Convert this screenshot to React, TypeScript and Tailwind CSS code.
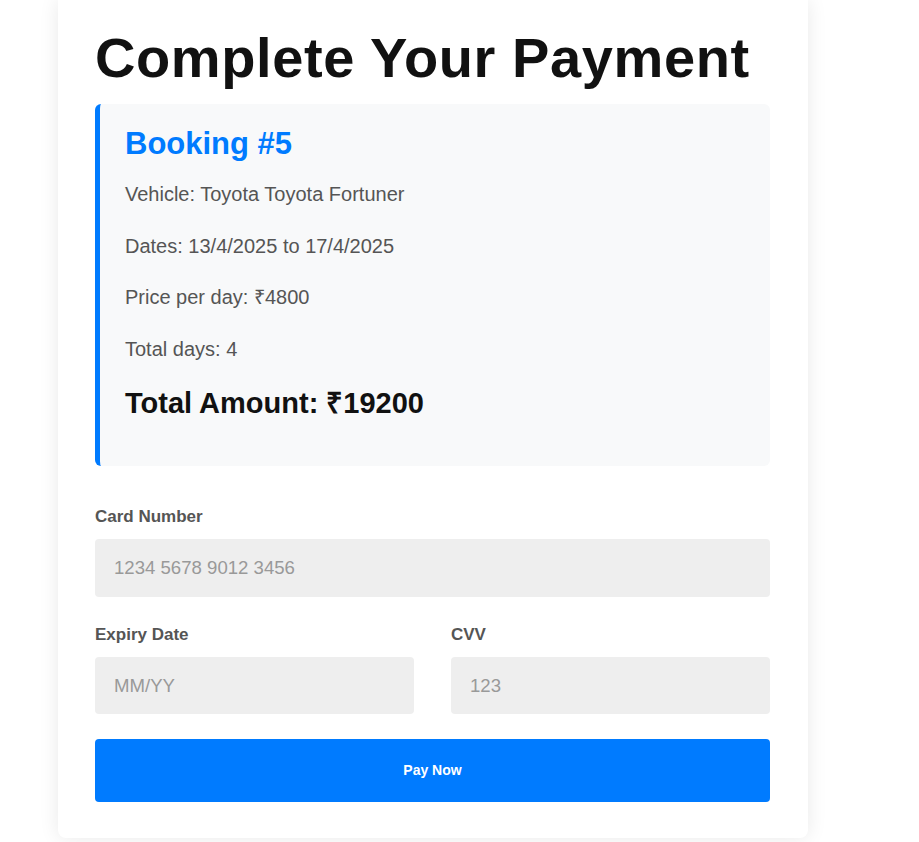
import { useState } from "react";

export default function App() {
  const [card, setCard] = useState("");
  const [expiry, setExpiry] = useState("");
  const [cvv, setCvv] = useState("");

  return (
    <div className="min-h-screen bg-white font-['Liberation_Sans',Arial,sans-serif]">
      <div className="ml-[58px] w-[750px] bg-white rounded-b-lg shadow-[0_0_20px_rgba(0,0,0,0.09)] pl-[37px] pr-[38px] pt-[26px] pb-[36px]">
        <h1 className="text-[56px] leading-[64px] font-black text-[#111] tracking-[0.6px]">
          Complete Your Payment
        </h1>

        <div className="mt-[14px] bg-[#f8f9fa] border-l-[5px] border-[#007bff] rounded-md pl-[25px] pr-[25px] pt-[22px] pb-[46px]">
          <h2 className="text-[31px] leading-[35px] font-black text-[#007bff]">Booking #5</h2>
          <div className="mt-[19px] flex flex-col gap-[23px] text-[20px] leading-[28.5px] text-[#555]">
            <p>Vehicle: Toyota Toyota Fortuner</p>
            <p>Dates: 13/4/2025 to 17/4/2025</p>
            <p>Price per day: ₹4800</p>
            <p>Total days: 4</p>
          </div>
          <p className="mt-[24px] text-[29px] leading-[33px] font-black text-[#111]">
            Total Amount: ₹19200
          </p>
        </div>

        <form className="mt-[41px] flex flex-col" onSubmit={(e) => e.preventDefault()}>
          <label className="text-[17px] leading-[19px] font-bold text-[#555]">Card Number</label>
          <input
            value={card}
            onChange={(e) => setCard(e.target.value)}
            placeholder="1234 5678 9012 3456"
            className="mt-[13px] h-[58px] w-full rounded bg-[#eee] px-[19px] text-[18.6px] text-[#333] placeholder:text-[#999] outline-none"
          />

          <div className="mt-[28px] grid grid-cols-2 gap-[37px]">
            <div className="flex flex-col">
              <label className="text-[17px] leading-[19px] font-bold text-[#555]">Expiry Date</label>
              <input
                value={expiry}
                onChange={(e) => setExpiry(e.target.value)}
                placeholder="MM/YY"
                className="mt-[13px] h-[57px] w-full rounded bg-[#eee] px-[19px] text-[18.6px] text-[#333] placeholder:text-[#999] outline-none"
              />
            </div>
            <div className="flex flex-col">
              <label className="text-[17px] leading-[19px] font-bold text-[#555]">CVV</label>
              <input
                value={cvv}
                onChange={(e) => setCvv(e.target.value)}
                placeholder="123"
                className="mt-[13px] h-[57px] w-full rounded bg-[#eee] px-[19px] text-[18.6px] text-[#333] placeholder:text-[#999] outline-none"
              />
            </div>
          </div>

          <button
            type="submit"
            className="mt-[25px] h-[63px] w-full rounded bg-[#007bff] text-white text-[14px] font-black"
          >
            Pay Now
          </button>
        </form>
      </div>
    </div>
  );
}
